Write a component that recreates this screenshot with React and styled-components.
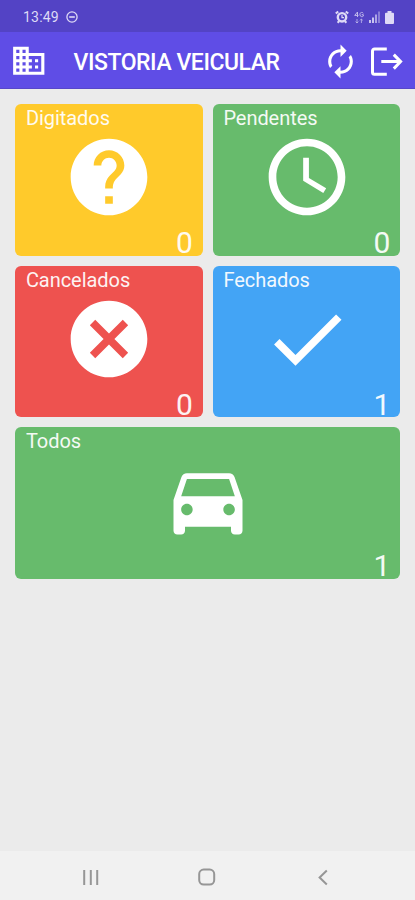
import React from 'react';
import styled, { createGlobalStyle } from 'styled-components';

const GlobalStyle = createGlobalStyle`
	* {
		box-sizing: border-box;
	}
	body {
		margin: 0;
		background: #ebebeb;
		font-family: Roboto, 'Noto Sans', sans-serif;
	}
`;

const Screen = styled.div`
	display: flex;
	flex-direction: column;
	width: 415px;
	height: 900px;
	background: #ebebeb;
`;
const StatusBar = styled.div`
	display: flex;
	align-items: center;
	justify-content: space-between;
	height: 32px;
	padding: 2px 21px 0 23px;
	background: #5343c5;
	color: #dedaf6;
`;
const StatusGroup = styled.div`
	display: flex;
	align-items: center;
	gap: ${({ $gap }) => $gap}px;
`;
const Time = styled.span`
	font-size: 14px;
	line-height: 16px;
	letter-spacing: 0.2px;
`;
const Header = styled.header`
	display: flex;
	align-items: center;
	height: 57px;
	padding: 2px 10px 0;
	background: #5f4de6;
	border-bottom: 1px solid #5747c9;
	color: #fff;
`;
const Title = styled.h1`
	flex: 1;
	margin: 3px 0 0 26px;
	font-size: 23px;
	font-weight: 500;
	line-height: 28px;
	letter-spacing: -0.45px;
	white-space: nowrap;
`;
const HeaderActions = styled.div`
	display: flex;
	align-items: center;
	gap: 8px;
	margin-right: 1px;
`;
const Icon = styled.svg`
	display: block;
	flex: none;
	width: ${({ $w }) => $w}px;
	height: ${({ $h, $w }) => $h || $w}px;
	fill: currentColor;
`;
const LineIcon = styled(Icon)`
	fill: none;
	stroke: currentColor;
	stroke-width: ${({ $stroke }) => $stroke};
`;
const Board = styled.main`
	flex: 1;
	display: grid;
	grid-template-columns: 1fr 1fr;
	grid-auto-rows: 151.5px;
	gap: 10px;
	padding: 15px 14.6px 0 15.4px;
`;
const Card = styled.section`
	display: flex;
	flex-direction: column;
	align-items: center;
	grid-column: ${({ $wide }) => ($wide ? '1 / -1' : 'auto')};
	padding: 2px 11px 0;
	border-radius: 6px;
	background: ${({ $color }) => $color};
	color: #fff;
`;
const Label = styled.div`
	align-self: flex-start;
	height: 25px;
	margin-left: -0.5px;
	font-size: 20px;
	line-height: 25px;
	letter-spacing: -0.05px;
	opacity: 0.93;
`;
const Count = styled.div`
	align-self: flex-end;
	font-size: 30px;
	line-height: 24px;
	margin-top: 8px;
	margin-right: -1px;
	opacity: 0.93;
`;
const NavBar = styled.nav`
	display: flex;
	align-items: center;
	justify-content: space-between;
	height: 49px;
	padding: 3px 83px 0 82px;
	background: #f1f1f1;
	color: #969696;
`;

const cards = [
	{
		label: 'Digitados',
		count: 0,
		color: '#ffca2b',
		path: 'M12 2C6.48 2 2 6.48 2 12s4.48 10 10 10 10-4.48 10-10S17.52 2 12 2zm1 17h-2v-2h2v2zm2.07-7.75l-.9.92C13.45 12.9 13 13.5 13 15h-2v-.5c0-1.1.45-2.1 1.17-2.83l1.24-1.26c.37-.36.59-.86.59-1.41 0-1.1-.9-2-2-2s-2 .9-2 2H8c0-2.21 1.79-4 4-4s4 1.79 4 4c0 .88-.36 1.68-.93 2.25z',
	},
	{
		label: 'Pendentes',
		count: 0,
		color: '#67bb6c',
		path: 'M11.99 2C6.47 2 2 6.48 2 12s4.47 10 9.99 10C17.52 22 22 17.52 22 12S17.52 2 11.99 2zM12 20c-4.42 0-8-3.58-8-8s3.58-8 8-8 8 3.58 8 8-3.58 8-8 8zm.5-13H11v6l5.25 3.15.75-1.23-4.5-2.67z',
	},
	{
		label: 'Cancelados',
		count: 0,
		color: '#ee524f',
		path: 'M12 2C6.47 2 2 6.47 2 12s4.47 10 10 10 10-4.47 10-10S17.53 2 12 2zm5 13.59L15.59 17 12 13.41 8.41 17 7 15.59 10.59 12 7 8.41 8.41 7 12 10.59 15.59 7 17 8.41 13.41 12 17 15.59z',
	},
	{
		label: 'Fechados',
		count: 1,
		color: '#43a4f5',
		path: 'M9 16.17L4.83 12l-1.42 1.41L9 19 21 7l-1.41-1.41z',
	},
	{
		label: 'Todos',
		count: 1,
		color: '#67bb6c',
		wide: true,
		path: 'M18.92 6.01C18.72 5.42 18.16 5 17.5 5h-11c-.66 0-1.21.42-1.42 1.01L3 12v8c0 .55.45 1 1 1h1c.55 0 1-.45 1-1v-1h12v1c0 .55.45 1 1 1h1c.55 0 1-.45 1-1v-8l-2.08-5.99zM6.5 16c-.83 0-1.5-.67-1.5-1.5S5.67 13 6.5 13s1.5.67 1.5 1.5S7.33 16 6.5 16zm11 0c-.83 0-1.5-.67-1.5-1.5s.67-1.5 1.5-1.5 1.5.67 1.5 1.5-.67 1.5-1.5 1.5zM5 11l1.5-4.5h11L19 11H5z',
	},
];

const StatusIcons = () => (
	<StatusGroup $gap={5}>
		{/* alarm */}
		<LineIcon $w={14} $h={14} $stroke={2.4} viewBox="0 0 14 14">
			<circle cx="7" cy="7.3" r="4.2" />
			<path d="M7 5v2.6h2" strokeWidth="1.2" />
			<path d="M.8 3.6l2.4-2.2M13.2 3.6l-2.4-2.2M2.6 12.8l1.5-1.5M11.4 12.8l-1.5-1.5" strokeWidth="2" />
		</LineIcon>
		{/* 4G with data arrows */}
		<LineIcon $w={10} $h={13} $stroke={1} viewBox="0 0 10 13" opacity="0.8">
			<path d="M3.5 6V1L.7 4.4h3.8M9.3 2.3C8.6 1 5.9 1 5.9 3.5s2.7 2.6 3.4 1.6V3.7H7.7" />
			<path d="M3 8v4M1.6 10.6L3 12l1.4-1.4M7.4 12V8M6 9.4L7.4 8l1.4 1.4" strokeWidth="0.8" />
		</LineIcon>
		{/* signal */}
		<Icon $w={11} $h={12} viewBox="0 0 11 12">
			<path d="M0 9h2v3H0zM3 6.5h2V12H3z" opacity="0.85" />
			<path d="M6 3.5h2V12H6z" opacity="0.65" />
			<path d="M9 0.5h2V12H9z" opacity="0.4" />
		</Icon>
		{/* battery */}
		<Icon $w={9} $h={13} viewBox="0 0 9 13">
			<path d="M2.5 0h4v1.7H8a1 1 0 0 1 1 1V12a1 1 0 0 1-1 1H1a1 1 0 0 1-1-1V2.7a1 1 0 0 1 1-1h1.5z" />
		</Icon>
	</StatusGroup>
);

const App = () => {
	return (
		<Screen>
			<GlobalStyle />
			<StatusBar>
				<StatusGroup $gap={7}>
					<Time>13:49</Time>
					<LineIcon $w={12} $stroke={1.3} viewBox="0 0 12 12">
						<circle cx="6" cy="6" r="5.1" />
						<path d="M3.2 6h5.6" strokeWidth="1.6" />
					</LineIcon>
				</StatusGroup>
				<StatusIcons />
			</StatusBar>
			<Header>
				<Icon $w={37.5} viewBox="0 0 24 24">
					<path d="M12 7V3H2v18h20V7H12zM6 19H4v-2h2v2zm0-4H4v-2h2v2zm0-4H4V9h2v2zm0-4H4V5h2v2zm4 12H8v-2h2v2zm0-4H8v-2h2v2zm0-4H8V9h2v2zm0-4H8V5h2v2zm10 12h-8v-2h2v-2h-2v-2h2v-2h-2V9h8v10zm-2-8h-2v2h2v-2zm0 4h-2v2h2v-2z" />
				</Icon>
				<Title>VISTORIA VEICULAR</Title>
				<HeaderActions>
					<Icon $w={37} viewBox="0 0 24 24">
						<path d="M12 6v3l4-4-4-4v3c-4.42 0-8 3.58-8 8 0 1.57.46 3.03 1.24 4.26L6.7 14.8c-.45-.83-.7-1.79-.7-2.8 0-3.31 2.69-6 6-6zm6.76 1.74L17.3 9.2c.44.84.7 1.79.7 2.8 0 3.31-2.69 6-6 6v-3l-4 4 4 4v-3c4.42 0 8-3.58 8-8 0-1.57-.46-3.03-1.24-4.26z" />
					</Icon>
					<LineIcon $w={37} $stroke={3} viewBox="0 0 37 37">
						<path d="M19.8 5.9H7.5a2 2 0 0 0-2 2v21.4a2 2 0 0 0 2 2h12.3" />
						<path d="M14.3 18.6h19M26.8 11.6l6.8 7-6.8 7" />
					</LineIcon>
				</HeaderActions>
			</Header>
			<Board>
				{cards.map((card) => (
					<Card key={card.label} $color={card.color} $wide={card.wide}>
						<Label>{card.label}</Label>
						<Icon $w={92} viewBox="0 0 24 24">
							<path d={card.path} />
						</Icon>
						<Count>{card.count}</Count>
					</Card>
				))}
			</Board>
			<NavBar>
				<LineIcon $w={17} $stroke={2} viewBox="0 0 17 17">
					<path d="M2.2 1v15M8.8 1v15M15.2 1v15" />
				</LineIcon>
				<LineIcon $w={18} $stroke={2} viewBox="0 0 18 18">
					<rect x="1.2" y="1.6" width="15" height="15" rx="4.5" />
				</LineIcon>
				<LineIcon $w={17} $stroke={2} viewBox="0 0 17 17">
					<path d="M11.8 1.5L4.6 8.5l7.2 7" />
				</LineIcon>
			</NavBar>
		</Screen>
	);
};

export default App;
